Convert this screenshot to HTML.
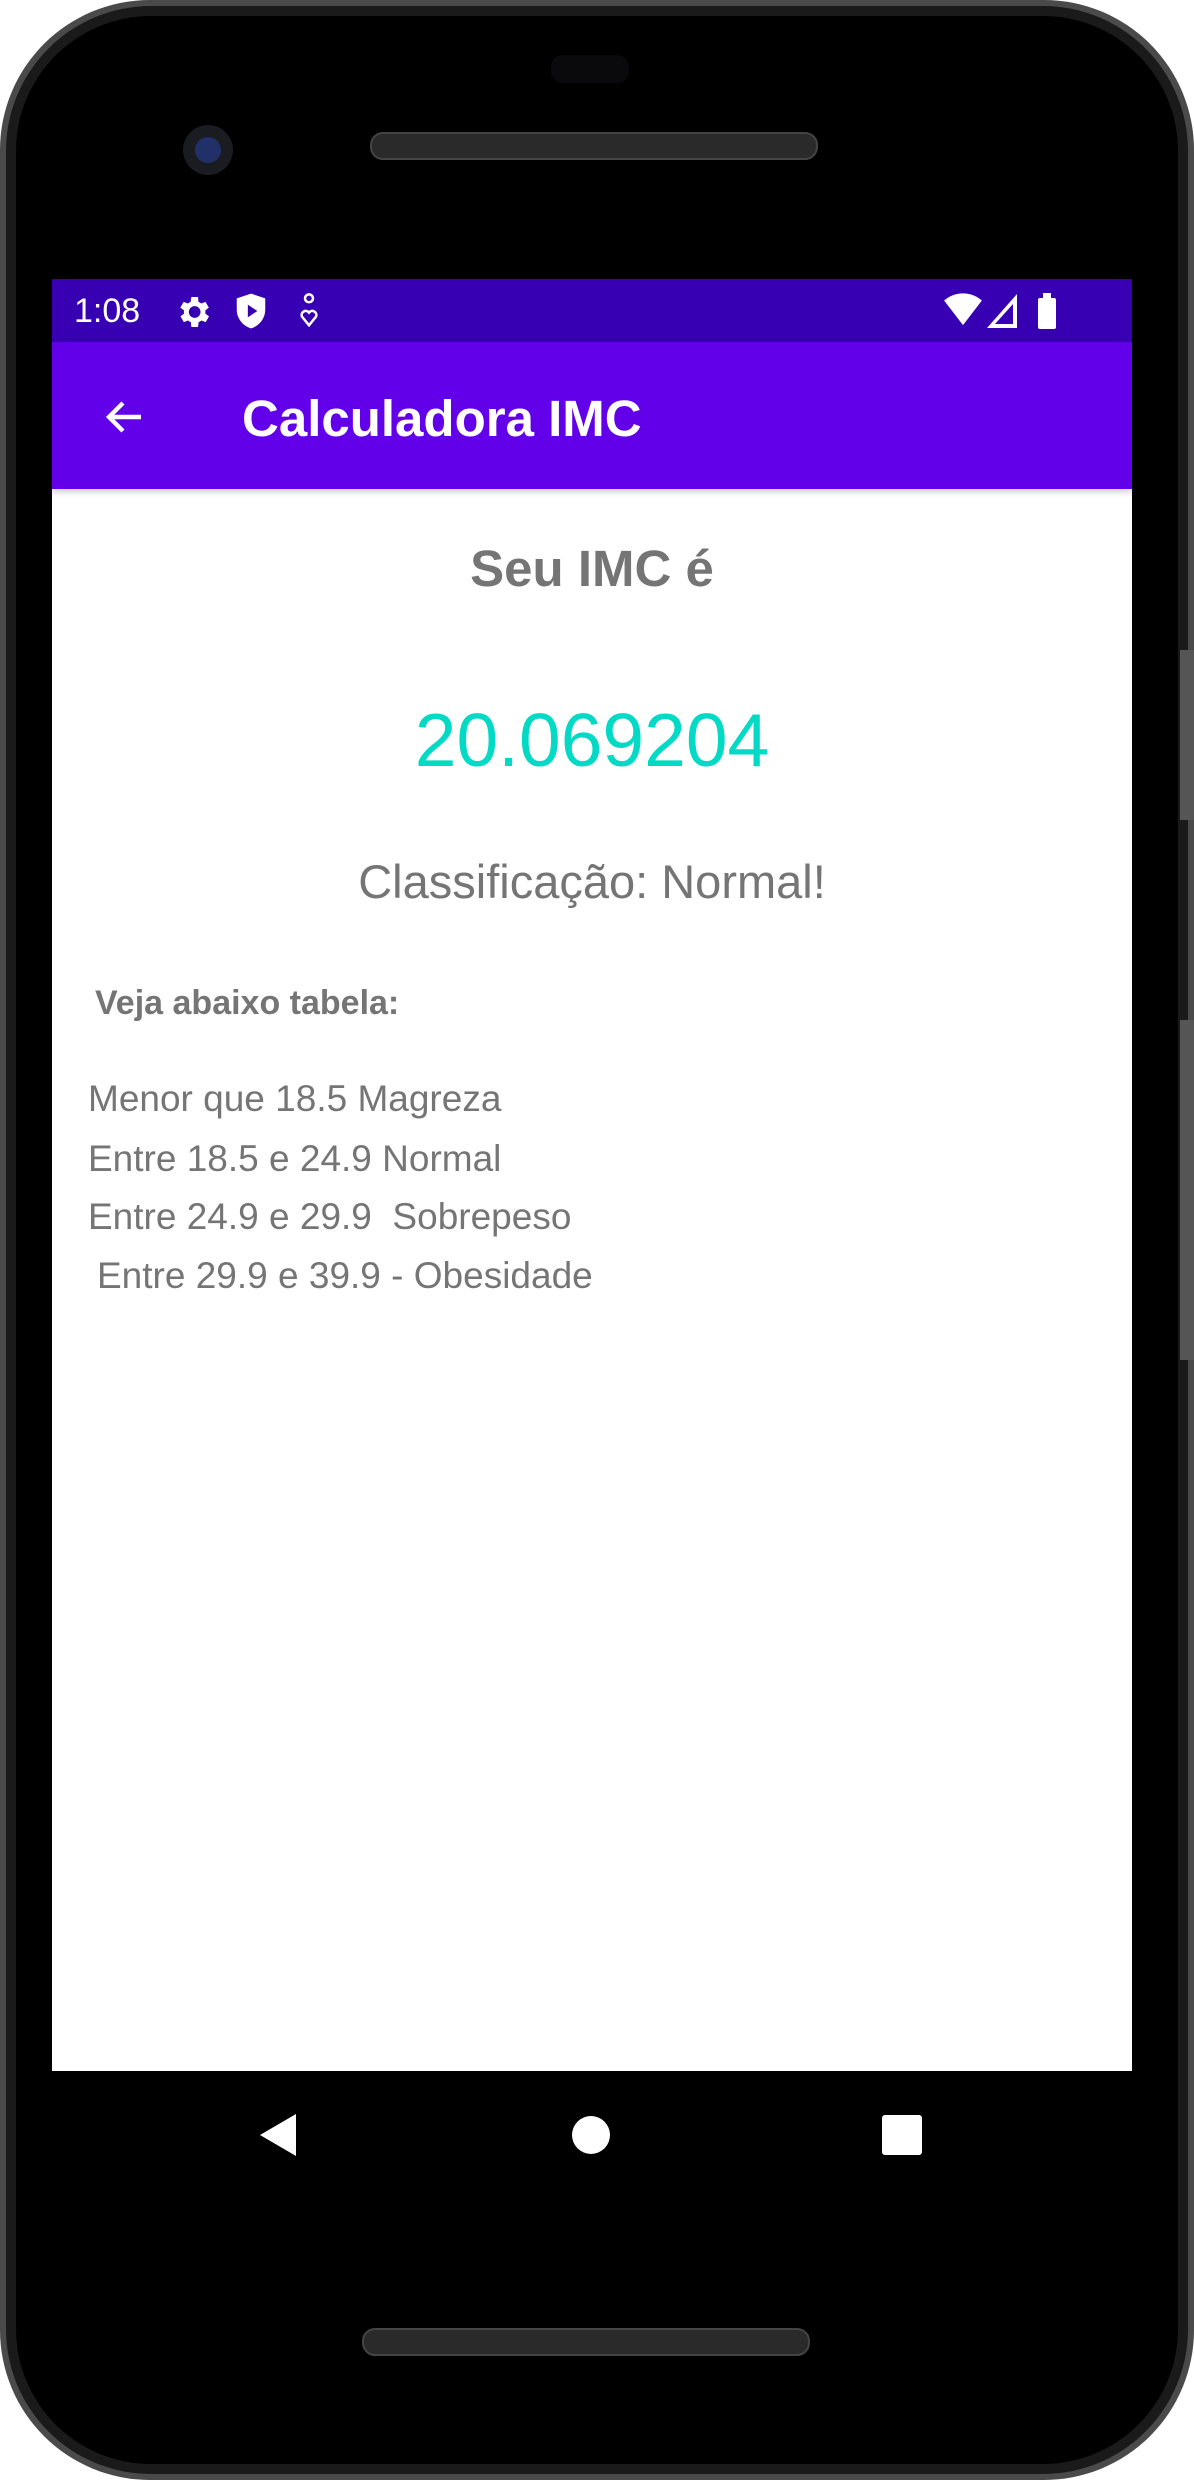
<!DOCTYPE html>
<html><head><meta charset="utf-8"><style>
body{margin:0;width:1194px;height:2480px;background:#fff;position:relative;overflow:hidden;font-family:"Liberation Sans",sans-serif}
.a{position:absolute}
.t{position:absolute;white-space:nowrap;line-height:1}
</style></head><body>
<div class="a" style="left:0;top:0;width:1194px;height:2480px;border-radius:150px;background:#4a4a4a"></div>
<div class="a" style="left:6px;top:6px;width:1182px;height:2468px;border-radius:145px;background:#1a1a1a"></div>
<div class="a" style="left:16px;top:16px;width:1162px;height:2448px;border-radius:135px;background:#000"></div>
<div class="a" style="left:1180px;top:650px;width:14px;height:170px;background:#555"></div>
<div class="a" style="left:1180px;top:1020px;width:14px;height:340px;background:#555"></div>
<div class="a" style="left:551px;top:55px;width:78px;height:28px;border-radius:12px;background:#0a0a0c"></div>
<div class="a" style="left:183px;top:125px;width:50px;height:50px;border-radius:50%;background:#1b1b22"></div>
<div class="a" style="left:195px;top:137px;width:26px;height:26px;border-radius:50%;background:#22306a"></div>
<div class="a" style="left:370px;top:132px;width:444px;height:24px;border-radius:13px;background:#2a2a2a;border:2px solid #444"></div>
<div class="a" style="left:362px;top:2328px;width:444px;height:24px;border-radius:13px;background:#2a2a2a;border:2px solid #444"></div>

<div class="a" style="left:52px;top:489px;width:1080px;height:1582px;background:#fff"></div>

<div class="a" style="left:52px;top:279px;width:1080px;height:63px;background:#3700b3"></div>
<div class="t" style="left:74px;top:294px;font-size:34px;color:#fff">1:08</div>
<svg class="a" style="left:173px;top:292px" width="40" height="40" viewBox="0 0 24 24"><path fill="#fff" d="M19.4 13a7.5 7.5 0 000-2l2.1-1.6-2-3.5-2.5 1a7 7 0 00-1.7-1L15 3h-4l-.4 2.9a7 7 0 00-1.7 1l-2.5-1-2 3.5L6.6 11a7.5 7.5 0 000 2l-2.1 1.6 2 3.5 2.5-1a7 7 0 001.7 1L11 21h4l.4-2.9a7 7 0 001.7-1l2.5 1 2-3.5zM13 15.5a3.5 3.5 0 110-7 3.5 3.5 0 010 7z"/></svg>
<svg class="a" style="left:233px;top:292px" width="36" height="38" viewBox="0 0 20 24"><path fill="#fff" d="M10 1L1 4v7c0 6 4 10.5 9 12 5-1.5 9-6 9-12V4z"/><path fill="#3700b3" d="M8 8v8l6-4z"/></svg>
<svg class="a" style="left:297px;top:292px" width="24" height="38" viewBox="0 0 12 24"><circle cx="6" cy="4" r="2.5" fill="none" stroke="#fff" stroke-width="1.6"/><path d="M6 21L1.5 15.5a2.6 2.6 0 014.5-2.5 2.6 2.6 0 014.5 2.5z" fill="none" stroke="#fff" stroke-width="1.6"/></svg>
<svg class="a" style="left:944px;top:293px" width="38" height="34" viewBox="0 0 20 18"><path fill="#fff" d="M10 17L0 4a15 15 0 0120 0z"/></svg>
<svg class="a" style="left:987px;top:294px" width="30" height="34" viewBox="0 0 15 17"><path fill="#fff" d="M0 17L15 0v17zM4 15h9V5z"/><path fill="#3700b3" d="M4.5 15h7V7z"/></svg>
<div class="a" style="left:1038px;top:298px;width:18px;height:31px;background:#fff;border-radius:2px"></div>
<div class="a" style="left:1043px;top:293px;width:8px;height:6px;background:#fff"></div>

<div class="a" style="left:52px;top:342px;width:1080px;height:147px;background:#6200ea;box-shadow:0 3px 6px rgba(0,0,0,.2)"></div>
<svg class="a" style="left:101px;top:393px" width="48" height="48" viewBox="0 0 24 24"><path d="M20 12H5M11 5l-7 7 7 7" fill="none" stroke="#fff" stroke-width="2.2"/></svg>
<div class="t" style="left:242px;top:393px;font-size:51px;font-weight:bold;color:#fff">Calculadora IMC</div>

<div class="t" style="left:52px;width:1080px;text-align:center;top:543px;font-size:51px;font-weight:bold;color:#757575">Seu IMC é</div>
<div class="t" style="left:52px;width:1080px;text-align:center;top:703px;font-size:75px;color:#03dac5">20.069204</div>
<div class="t" style="left:52px;width:1080px;text-align:center;top:858px;font-size:47px;color:#757575">Classificação: Normal!</div>
<div class="t" style="left:95px;top:986px;font-size:34px;font-weight:bold;color:#757575">Veja abaixo tabela:</div>
<div class="t" style="left:88px;top:1080px;font-size:37px;color:#757575">Menor que 18.5 Magreza</div>
<div class="t" style="left:88px;top:1140px;font-size:37px;color:#757575">Entre 18.5 e 24.9 Normal</div>
<div class="t" style="left:88px;top:1198px;font-size:37px;color:#757575">Entre 24.9 e 29.9&nbsp; Sobrepeso</div>
<div class="t" style="left:97px;top:1257px;font-size:37px;color:#757575">Entre 29.9 e 39.9 - Obesidade</div>

<svg class="a" style="left:258px;top:2114px" width="38" height="42" viewBox="0 0 38 42"><path fill="#fff" d="M38 0v42L2 21z"/></svg>
<div class="a" style="left:572px;top:2116px;width:38px;height:38px;border-radius:50%;background:#fff"></div>
<div class="a" style="left:882px;top:2115px;width:40px;height:40px;border-radius:3px;background:#fff"></div>
</body></html>
